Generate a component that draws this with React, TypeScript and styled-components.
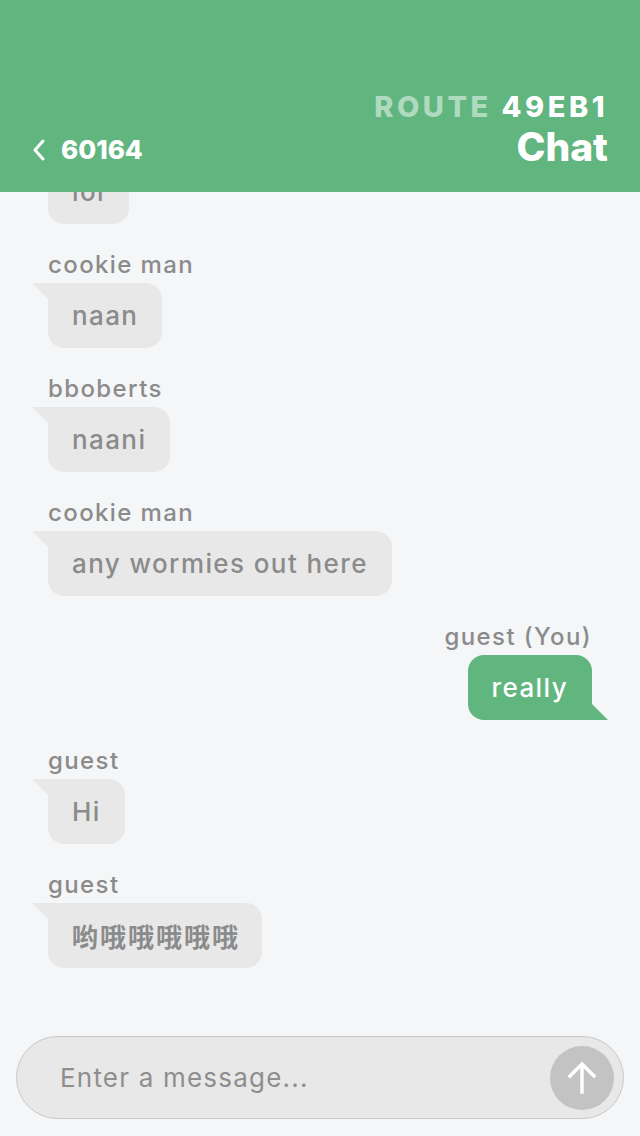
import React from "react";
import styled, { createGlobalStyle } from "styled-components";

const GREEN = "#61b57e";
const BUBBLE = "#e8e8e8";
const GREY_TEXT = "#8b8b8b";

const Global = createGlobalStyle`
  html, body { margin: 0; padding: 0; }
  body {
    background: #f5f6f8;
    font-family: "Inter", "Noto Sans CJK SC", sans-serif;
  }
  * { box-sizing: border-box; }
`;

const Screen = styled.div`
  width: 640px;
  height: 1136px;
  display: flex;
  flex-direction: column;
  background: #f5f6f8;
  overflow: hidden;
`;

const Header = styled.header`
  height: 192px;
  flex: none;
  background: ${GREEN};
  display: flex;
  align-items: flex-end;
  justify-content: space-between;
  padding: 0 32px 24px 32px;
  color: #fff;
`;

const BackLink = styled.div`
  display: flex;
  align-items: center;
  gap: 15px;
  font-weight: 800;
  font-size: 26px;
  line-height: 32px;
  margin-bottom: 2px;
`;

const TitleBlock = styled.div`
  display: flex;
  flex-direction: column;
  align-items: flex-end;
`;

const RouteLine = styled.div`
  font-weight: 800;
  font-size: 29px;
  line-height: 34px;
  letter-spacing: 3.5px;
  margin-bottom: 2px;
`;

const Dim = styled.span`
  color: rgba(255, 255, 255, 0.5);
`;

const Title = styled.div`
  font-weight: 800;
  font-size: 39px;
  line-height: 42px;
`;

const Messages = styled.main`
  flex: 1;
  min-height: 0;
  overflow: hidden;
  display: flex;
  flex-direction: column;
  justify-content: flex-end;
  padding: 0 32px 52px 32px;
`;

const Message = styled.div<{ $mine?: boolean }>`
  display: flex;
  flex-direction: column;
  align-items: ${(p) => (p.$mine ? "flex-end" : "flex-start")};
  padding: ${(p) => (p.$mine ? "0 16px 0 0" : "0 0 0 16px")};
  & + & {
    margin-top: 26px;
  }
`;

const Name = styled.div`
  color: ${GREY_TEXT};
  font-size: 24px;
  font-weight: 500;
  line-height: 30px;
  letter-spacing: 1.4px;
  margin-bottom: 3px;
`;

const Bubble = styled.div<{ $mine?: boolean }>`
  position: relative;
  height: 65px;
  display: flex;
  align-items: center;
  padding: 0 24px;
  font-size: 26px;
  font-weight: 500;
  letter-spacing: 1.4px;
  background: ${(p) => (p.$mine ? GREEN : BUBBLE)};
  color: ${(p) => (p.$mine ? "#fff" : GREY_TEXT)};
  border-radius: ${(p) => (p.$mine ? "16px 16px 0 16px" : "0 16px 16px 16px")};
  white-space: nowrap;

  &::before {
    content: "";
    position: absolute;
    width: 16px;
    height: 16px;
    background: inherit;
    ${(p) =>
      p.$mine
        ? `right: -16px; bottom: 0; clip-path: polygon(0 0, 100% 100%, 0 100%);`
        : `left: -16px; top: 0; clip-path: polygon(0 0, 100% 0, 100% 100%);`}
  }
`;

const CjkText = styled.span`
  font-family: "Noto Sans CJK SC", sans-serif;
  font-weight: 700;
  letter-spacing: 2px;
  margin-right: -2px;
`;

const Footer = styled.footer`
  flex: none;
  padding: 16px 16px 17px 16px;
`;

const InputBar = styled.div`
  height: 83px;
  border-radius: 42px;
  background: ${BUBBLE};
  border: 1.5px solid #c8c8c8;
  display: flex;
  align-items: center;
  padding: 0 9px 0 41px;
`;

const Input = styled.input`
  flex: 1;
  min-width: 0;
  border: none;
  background: transparent;
  outline: none;
  font-family: inherit;
  font-size: 26px;
  font-weight: 400;
  letter-spacing: 1.2px;
  color: #555;
  &::placeholder {
    color: #8e8e8e;
  }
`;

const SendButton = styled.button`
  width: 64px;
  height: 64px;
  border-radius: 50%;
  border: none;
  background: #c3c3c3;
  display: flex;
  align-items: center;
  justify-content: center;
  padding: 0;
  flex: none;
`;

type Msg = { name: string; text: string; mine?: boolean; cjk?: boolean };

const messages: Msg[] = [
  { name: "cookie man", text: "lol" },
  { name: "cookie man", text: "naan" },
  { name: "bboberts", text: "naani" },
  { name: "cookie man", text: "any wormies out here" },
  { name: "guest (You)", text: "really", mine: true },
  { name: "guest", text: "Hi" },
  { name: "guest", text: "哟哦哦哦哦哦", cjk: true },
];

export default function App() {
  return (
    <>
      <Global />
      <Screen>
        <Header>
          <BackLink>
            <svg width="14" height="22" viewBox="0 0 14 22" fill="none">
              <path d="M11 2 L3 11 L11 20" stroke="#fff" strokeWidth="3" strokeLinecap="round" strokeLinejoin="round" />
            </svg>
            60164
          </BackLink>
          <TitleBlock>
            <RouteLine>
              <Dim>ROUTE</Dim> 49EB1
            </RouteLine>
            <Title>Chat</Title>
          </TitleBlock>
        </Header>
        <Messages>
          {messages.map((m, i) => (
            <Message key={i} $mine={m.mine}>
              <Name>{m.name}</Name>
              <Bubble $mine={m.mine}>{m.cjk ? <CjkText>{m.text}</CjkText> : m.text}</Bubble>
            </Message>
          ))}
        </Messages>
        <Footer>
          <InputBar>
            <Input placeholder="Enter a message..." />
            <SendButton aria-label="Send">
              <svg width="34" height="34" viewBox="0 0 34 34" fill="none">
                <path d="M17 31 V4 M5 15 L17 3 L29 15" stroke="#fff" strokeWidth="3.5" strokeLinecap="square" />
              </svg>
            </SendButton>
          </InputBar>
        </Footer>
      </Screen>
    </>
  );
}
